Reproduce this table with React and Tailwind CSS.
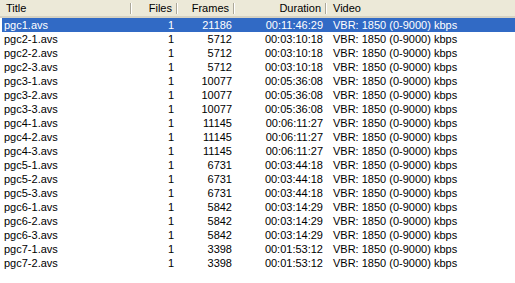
import React from 'react'

const rows = [
  ['pgc1.avs', 21186, '00:11:46:29'],
  ['pgc2-1.avs', 5712, '00:03:10:18'],
  ['pgc2-2.avs', 5712, '00:03:10:18'],
  ['pgc2-3.avs', 5712, '00:03:10:18'],
  ['pgc3-1.avs', 10077, '00:05:36:08'],
  ['pgc3-2.avs', 10077, '00:05:36:08'],
  ['pgc3-3.avs', 10077, '00:05:36:08'],
  ['pgc4-1.avs', 11145, '00:06:11:27'],
  ['pgc4-2.avs', 11145, '00:06:11:27'],
  ['pgc4-3.avs', 11145, '00:06:11:27'],
  ['pgc5-1.avs', 6731, '00:03:44:18'],
  ['pgc5-2.avs', 6731, '00:03:44:18'],
  ['pgc5-3.avs', 6731, '00:03:44:18'],
  ['pgc6-1.avs', 5842, '00:03:14:29'],
  ['pgc6-2.avs', 5842, '00:03:14:29'],
  ['pgc6-3.avs', 5842, '00:03:14:29'],
  ['pgc7-1.avs', 3398, '00:01:53:12'],
  ['pgc7-2.avs', 3398, '00:01:53:12'],
]

const cols = 'grid grid-cols-[132px_46px_57px_92px_1fr]'

function HeaderCell({ children, right, last }) {
  return (
    <div className={`relative flex items-center h-full px-[6px] ${right ? 'justify-end' : ''}`}>
      {children}
      {!last && (
        <span className="absolute right-0 top-[3px] bottom-[2px] w-[2px] border-l border-[#aca899] border-r border-r-white" />
      )}
    </div>
  )
}

export default function App() {
  return (
    <div className="w-[515px] h-[283px] bg-white overflow-hidden text-[11px] leading-none text-black font-['Liberation_Sans',Arial,sans-serif]">
      <div className={`${cols} h-[18px] bg-[#ece9d8] border-b-[2px] border-b-[#d6d2c2]`}>
        <HeaderCell>Title</HeaderCell>
        <HeaderCell right>Files</HeaderCell>
        <HeaderCell right>Frames</HeaderCell>
        <HeaderCell right>Duration</HeaderCell>
        <HeaderCell last>Video</HeaderCell>
      </div>
      <div className="pl-[2px]">
        {rows.map(([title, frames, duration], i) => (
          <div
            key={title}
            className={`${cols} items-center h-[14px] ${i === 0 ? 'bg-[#316ac5] text-white' : ''}`}
          >
            <span className="pl-[2px]">{title}</span>
            <span className="text-right pr-[6px]">1</span>
            <span className="text-right pr-[5px]">{frames}</span>
            <span className="text-right pr-[6px]">{duration}</span>
            <span className="pl-[4px]">VBR: 1850 (0-9000) kbps</span>
          </div>
        ))}
      </div>
    </div>
  )
}
